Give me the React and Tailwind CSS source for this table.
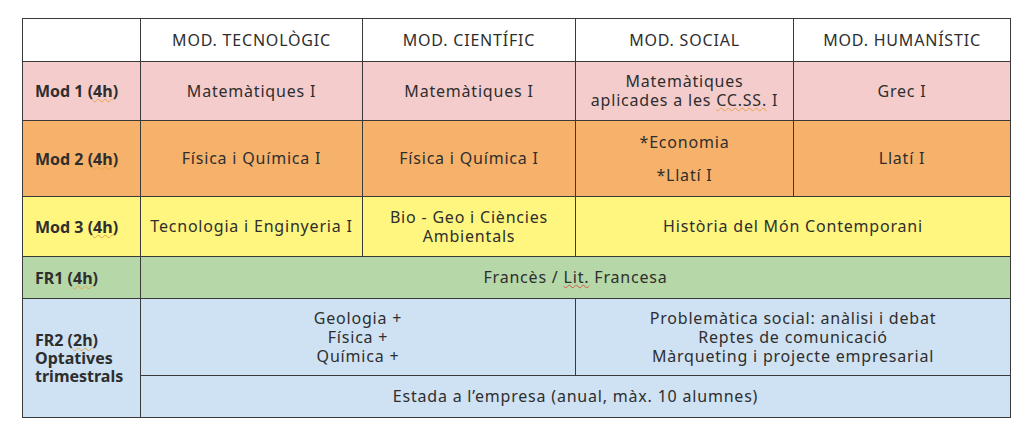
import React from "react";

const cols = [118, 222, 213, 218, 217];

function Hint({ children, color = "decoration-[#e3a24a]" }) {
  return (
    <span className={`underline decoration-wavy decoration-1 underline-offset-[1px] ${color}`}>
      {children}
    </span>
  );
}

function Label({ children }) {
  return (
    <td className="border border-[#3a3a3a] px-3 text-left font-bold align-middle">
      {children}
    </td>
  );
}

function Cell({ children, span = 1 }) {
  return (
    <td colSpan={span} className="border border-[#3a3a3a] px-2 text-center align-middle leading-[19px] tracking-[0.8px]">
      {children}
    </td>
  );
}

export default function App() {
  return (
    <div className="w-[1024px] h-[429px] bg-white pt-[18px] pl-[22px]">
      <table
        className="table-fixed border-collapse text-[16px] text-[#2e2e2e]"
        style={{ width: 988, fontFamily: "'Noto Sans', Lato, sans-serif" }}
      >
        <colgroup>
          {cols.map((w, i) => (
            <col key={i} style={{ width: w }} />
          ))}
        </colgroup>
        <tbody>
          {/* Header */}
          <tr className="h-[43px] bg-white">
            <td className="border border-[#3a3a3a]" />
            <Cell>MOD. TECNOLÒGIC</Cell>
            <Cell>MOD. CIENTÍFIC</Cell>
            <Cell>MOD. SOCIAL</Cell>
            <Cell>MOD. HUMANÍSTIC</Cell>
          </tr>

          <tr className="h-[59px] bg-[#f4cccc]">
            <Label>Mod 1 (<Hint>4h</Hint>)</Label>
            <Cell>Matemàtiques I</Cell>
            <Cell>Matemàtiques I</Cell>
            <Cell>
              Matemàtiques
              <br />
              aplicades a les <Hint>CC.SS.</Hint> I
            </Cell>
            <Cell>Grec I</Cell>
          </tr>

          <tr className="h-[76px] bg-[#f6b26b]">
            <Label>Mod 2 (<Hint>4h</Hint>)</Label>
            <Cell>Física i Química I</Cell>
            <Cell>Física i Química I</Cell>
            <Cell>
              <div className="flex flex-col gap-[14px]">
                <span>*Economia</span>
                <span>*Llatí I</span>
              </div>
            </Cell>
            <Cell>Llatí I</Cell>
          </tr>

          <tr className="h-[60px] bg-[#fef67e]">
            <Label>Mod 3 (<Hint>4h</Hint>)</Label>
            <Cell>Tecnologia i Enginyeria I</Cell>
            <Cell>
              Bio - Geo i Ciències
              <br />
              Ambientals
            </Cell>
            <Cell span={2}>Història del Món Contemporani</Cell>
          </tr>

          <tr className="h-[42px] bg-[#b6d7a8]">
            <Label>FR1 (<Hint>4h</Hint>)</Label>
            <Cell span={4}>
              Francès / <Hint color="decoration-[#d9534f]">Lit.</Hint> Francesa
            </Cell>
          </tr>

          <tr className="h-[77px] bg-[#cfe2f3]">
            <td rowSpan={2} className="border border-[#3a3a3a] px-3 text-left font-bold align-middle">
              <div className="flex flex-col leading-[18px]">
                <span>FR2 (<Hint>2h</Hint>)</span>
                <span>Optatives</span>
                <span>trimestrals</span>
              </div>
            </td>
            <Cell span={2}>
              Geologia +
              <br />
              Física +
              <br />
              Química +
            </Cell>
            <Cell span={2}>
              Problemàtica social: anàlisi i debat
              <br />
              Reptes de comunicació
              <br />
              Màrqueting i projecte empresarial
            </Cell>
          </tr>

          <tr className="h-[42px] bg-[#cfe2f3]">
            <Cell span={4}>Estada a l’empresa (anual, màx. 10 alumnes)</Cell>
          </tr>
        </tbody>
      </table>
    </div>
  );
}
